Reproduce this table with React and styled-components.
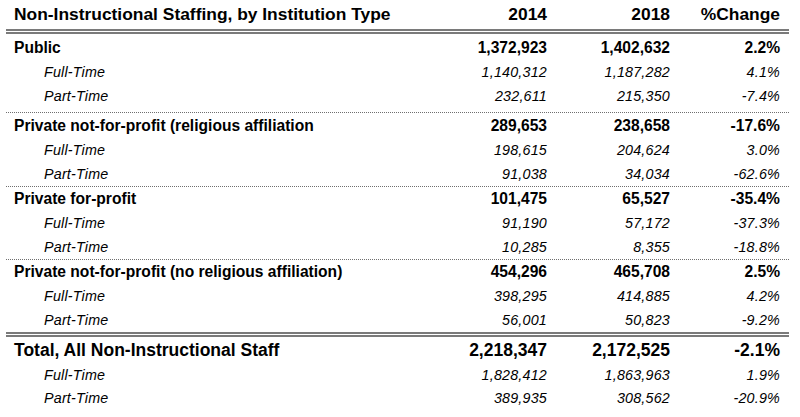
import styled, { createGlobalStyle } from 'styled-components';

const GlobalStyle = createGlobalStyle`
  body {
    margin: 0;
    background: #fff;
    font-family: "Liberation Sans", Arial, sans-serif;
    color: #000;
  }
`;

const groups = [
  {
    name: 'Public',
    values: ['1,372,923', '1,402,632', '2.2%'],
    ft: ['1,140,312', '1,187,282', '4.1%'],
    pt: ['232,611', '215,350', '-7.4%'],
    dotted: true,
    pad: [2, 4],
  },
  {
    name: 'Private not-for-profit (religious affiliation',
    values: ['289,653', '238,658', '-17.6%'],
    ft: ['198,615', '204,624', '3.0%'],
    pt: ['91,038', '34,034', '-62.6%'],
    dotted: true,
    pad: [1, 0],
  },
  {
    name: 'Private for-profit',
    values: ['101,475', '65,527', '-35.4%'],
    ft: ['91,190', '57,172', '-37.3%'],
    pt: ['10,285', '8,355', '-18.8%'],
    dotted: true,
    pad: [0, 0],
  },
  {
    name: 'Private not-for-profit (no religious affiliation)',
    values: ['454,296', '465,708', '2.5%'],
    ft: ['398,295', '414,885', '4.2%'],
    pt: ['56,001', '50,823', '-9.2%'],
    dotted: false,
    pad: [0, 0],
  },
];

const Table = styled.div`
  width: 783px;
  margin-left: 6px;
`;

const Row = styled.div`
  display: grid;
  grid-template-columns: 1fr 120px 123px 110px;
  padding-right: 9px;
  align-items: center;
  height: ${(p) => p.$h}px;
`;

const HeadRow = styled(Row)`
  font-size: 17.4px;
  font-weight: bold;
`;

// two grey hairlines with a thin white gap
const DoubleRule = styled.div`
  height: 1px;
  border-top: 2px solid #7a7a7a;
  border-bottom: 2px solid #7a7a7a;
`;

const Group = styled.div`
  padding-top: ${(p) => p.$top}px;
  padding-bottom: ${(p) => p.$bottom}px;
  border-bottom: ${(p) => (p.$dotted ? '1px dotted #6f6f6f' : 'none')};
`;

const Label = styled.div`
  padding-left: ${(p) => (p.$sub ? 38 : 8)}px;
  white-space: nowrap;
`;

const Num = styled.div`
  text-align: right;
  white-space: nowrap;
`;

const MainRow = styled(Row)`
  font-size: ${(p) => (p.$big ? 17.5 : 15.6)}px;
  font-weight: bold;
`;

const SubRow = styled(Row)`
  font-size: 14.3px;
  font-style: italic;
  letter-spacing: 0.2px;
`;

function Cells({ label, values, sub }) {
  return (
    <>
      <Label $sub={sub}>{label}</Label>
      {values.map((v, i) => (
        <Num key={i}>{v}</Num>
      ))}
    </>
  );
}

export default function App() {
  return (
    <>
      <GlobalStyle />
      <Table>
        <HeadRow $h={29}>
          <Cells label="Non-Instructional Staffing, by Institution Type" values={['2014', '2018', '%Change']} />
        </HeadRow>
        <DoubleRule />
        {groups.map((g) => (
          <Group key={g.name} $dotted={g.dotted} $top={g.pad[0]} $bottom={g.pad[1]}>
            <MainRow $h={24}>
              <Cells label={g.name} values={g.values} />
            </MainRow>
            <SubRow $h={24}>
              <Cells sub label="Full-Time" values={g.ft} />
            </SubRow>
            <SubRow $h={24}>
              <Cells sub label="Part-Time" values={g.pt} />
            </SubRow>
          </Group>
        ))}
        <DoubleRule />
        <Group $top={0} $bottom={0}>
          <MainRow $h={26} $big>
            <Cells label="Total, All Non-Instructional Staff" values={['2,218,347', '2,172,525', '-2.1%']} />
          </MainRow>
          <SubRow $h={23}>
            <Cells sub label="Full-Time" values={['1,828,412', '1,863,963', '1.9%']} />
          </SubRow>
          <SubRow $h={23}>
            <Cells sub label="Part-Time" values={['389,935', '308,562', '-20.9%']} />
          </SubRow>
        </Group>
      </Table>
    </>
  );
}
